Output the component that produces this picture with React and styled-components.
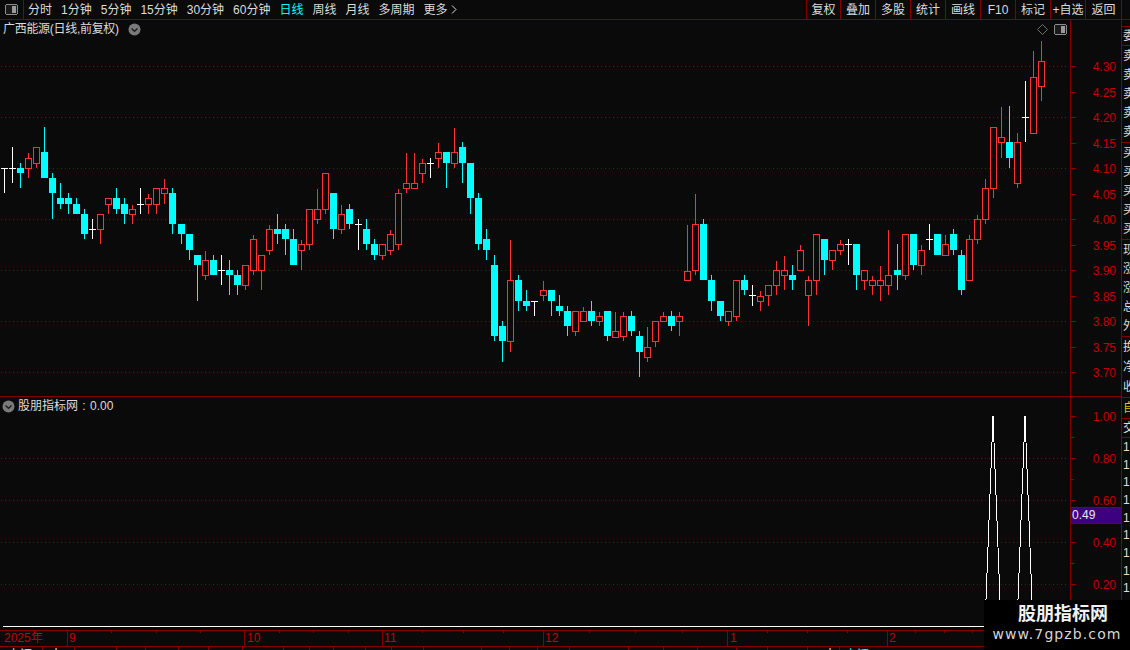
import React from "react";
import styled, { createGlobalStyle } from "styled-components";

const RED_LINE = "#840000";
const AXIS_TEXT = "#c40000";
const BG = "#0a0a0a";
const FONT = `"Liberation Sans", "Noto Sans CJK SC", sans-serif`;

const GlobalStyle = createGlobalStyle`
  html, body {
    margin: 0;
    padding: 0;
    background: ${BG};
    overflow: hidden;
  }
`;

const Page = styled.div`
  position: relative;
  display: flex;
  flex-direction: column;
  width: 1130px;
  height: 650px;
  overflow: hidden;
  background: ${BG};
  color: #ddd;
  font-family: ${FONT};
  font-size: 12px;
`;

/* toolbar */
const Toolbar = styled.div`
  display: flex;
  align-items: center;
  flex: none;
  height: 19px;
  padding-right: 8px;
  border-bottom: 1px solid ${RED_LINE};
`;

const ToggleCell = styled.div`
  display: flex;
  align-items: center;
  justify-content: center;
  box-sizing: border-box;
  width: 24px;
  height: 100%;
  border-right: 1px solid ${RED_LINE};
`;

const PeriodList = styled.div`
  display: flex;
  align-items: center;
  gap: 9px;
  margin-left: 4px;
`;

const Period = styled.span`
  color: ${(p) => (p.$active ? "#00ffff" : "#dcdcdc")};
  white-space: nowrap;
  line-height: 20px;
`;

const ActionList = styled.div`
  display: flex;
  height: 100%;
  margin-left: auto;
`;

const Action = styled.div`
  box-sizing: border-box;
  width: ${(p) => p.$w}px;
  border-left: 1px solid ${RED_LINE};
  border-right: ${(p) => (p.$last ? `1px solid ${RED_LINE}` : "none")};
  text-align: center;
  line-height: 20px;
  white-space: nowrap;
  color: #dcdcdc;
`;

/* main work area */
const Workspace = styled.div`
  display: flex;
  flex: none;
  height: 610px;
`;

const Charts = styled.div`
  display: flex;
  flex-direction: column;
  flex: none;
  width: 1122px;
  box-sizing: border-box;
  border-right: 1px solid ${RED_LINE};
`;

const Panel = styled.div`
  display: flex;
  flex: none;
  height: ${(p) => p.$h}px;
  box-sizing: border-box;
  border-bottom: ${(p) => (p.$ruled ? `1px solid ${RED_LINE}` : "none")};
`;

const ChartArea = styled.div`
  position: relative;
  flex: none;
  width: 1070px;
  height: 100%;
`;

const AxisArea = styled.div`
  position: relative;
  flex: 1;
  height: 100%;
  border-left: 1px solid ${RED_LINE};
`;

const Plot = styled.svg`
  display: block;
  shape-rendering: crispEdges;
`;

const PanelTitle = styled.div`
  position: absolute;
  top: ${(p) => p.$top}px;
  left: ${(p) => p.$left}px;
  display: flex;
  align-items: center;
  gap: ${(p) => p.$gap}px;
  line-height: 16px;
  letter-spacing: ${(p) => p.$tight || 0}px;
  word-spacing: 1px;
  white-space: nowrap;
  color: #dcdcdc;
`;

const CornerIcons = styled.div`
  position: absolute;
  top: 4px;
  right: 3px;
  display: flex;
  align-items: center;
  gap: 6px;
`;

const ValueTag = styled.div`
  position: absolute;
  top: 110px;
  left: 0;
  right: 0;
  height: 15px;
  background: #3d0080;
  border-top: 1px solid ${RED_LINE};
  border-bottom: 1px solid ${RED_LINE};
  padding-left: 1px;
  line-height: 15px;
  color: #e8e8e8;
`;

/* clipped quote column on the right edge */
const Sidebar = styled.div`
  display: flex;
  flex-direction: column;
  flex: 1;
  overflow: hidden;
`;

const SideTop = styled.div`
  flex: none;
  height: 6px;
`;

const SideGroup = styled.div`
  display: flex;
  flex-direction: column;
  flex: none;
  height: ${(p) => p.$h}px;
  box-sizing: border-box;
  border-top: 1px solid ${RED_LINE};
`;

const SideRow = styled.div`
  flex: 1;
  padding-left: 1px;
  display: flex;
  align-items: center;
  font-size: 12px;
  line-height: 1;
  white-space: nowrap;
  color: ${(p) => p.$color || "#dcdcdc"};
`;

/* time axis */
const TimeAxis = styled.div`
  position: relative;
  display: flex;
  flex: none;
  height: 15px;
  border-top: 1px solid ${RED_LINE};
  border-bottom: 1px solid ${RED_LINE};
`;

const TimeCell = styled.div`
  flex: none;
  box-sizing: border-box;
  width: ${(p) => p.$w}px;
  padding: 0 0 0 ${(p) => p.$pad}px;
  border-left: ${(p) => (p.$first ? "none" : `1px solid ${RED_LINE}`)};
  color: ${AXIS_TEXT};
  line-height: 15px;
  white-space: nowrap;
`;

const TickLayer = styled.svg`
  position: absolute;
  top: 0;
  left: 0;
  shape-rendering: crispEdges;
`;

const StatusBar = styled.div`
  display: flex;
  flex: none;
  height: 3px;
  overflow: hidden;
`;

const StatusCell = styled.div`
  flex: none;
  box-sizing: border-box;
  width: ${(p) => p.$w}px;
  padding-left: ${(p) => p.$pad}px;
  border-left: ${(p) => (p.$first ? "none" : `1px solid ${RED_LINE}`)};
  line-height: 17px;
  white-space: nowrap;
  overflow: hidden;
  color: ${(p) => p.$color || "#e4e4e4"};
`;

const Watermark = styled.div`
  position: absolute;
  left: 984px;
  top: 600px;
  width: 146px;
  height: 50px;
  background: #000;
  display: flex;
  flex-direction: column;
  align-items: center;
`;

const MarkName = styled.div`
  margin: 3px 0 0 12px;
  font-size: 18px;
  font-weight: 700;
  line-height: 22px;
  color: #f2f2f2;
`;

const MarkUrl = styled.div`
  font-family: "DejaVu Sans", sans-serif;
  font-size: 14px;
  line-height: 18px;
  letter-spacing: 1.1px;
  color: #d6d6d6;
`;

// candles traced from the chart: [x, high, top, bottom, low, kind] on a 3x grid
const seg = (x0, rows) =>
  rows.map(([x, hi, top, bot, lo, kind]) => ({
    x: Math.floor(x0 + x / 3),
    hi: Math.round(120 + hi / 3),
    top: Math.round(120 + top / 3),
    bot: Math.round(120 + bot / 3),
    lo: Math.round(120 + lo / 3),
    kind,
  }));

const candles = [
  ...seg(0, [
    [13, 145, 145, 145, 218, "w"], [37, 82, 145, 145, 188, "w"], [61, 130, 144, 158, 203, "c"],
    [85, 100, 115, 145, 173, "r"], [109, 82, 82, 130, 143, "r"], [133, 22, 97, 173, 173, "c"],
    [157, 160, 175, 218, 297, "c"], [181, 190, 235, 251, 266, "c"], [205, 220, 235, 251, 281, "c"],
    [229, 235, 252, 281, 281, "c"], [253, 267, 282, 341, 356, "c"], [277, 297, 327, 327, 356, "w"],
    [301, 283, 283, 328, 371, "r"], [325, 235, 235, 253, 281, "r"], [349, 205, 235, 266, 281, "c"],
    [373, 235, 252, 281, 311, "c"], [397, 255, 268, 283, 311, "r"], [421, 205, 253, 253, 281, "w"],
    [445, 223, 235, 253, 281, "r"], [469, 205, 205, 253, 281, "r"], [493, 178, 205, 220, 251, "r"],
    [517, 205, 220, 311, 341, "c"], [544, 312, 312, 341, 371, "c"], [568, 342, 342, 389, 419, "c"],
    [592, 405, 405, 434, 542, "c"], [616, 393, 421, 466, 479, "r"], [640, 405, 420, 464, 464, "c"],
    [664, 405, 451, 451, 494, "w"], [688, 420, 450, 464, 524, "c"], [712, 450, 465, 494, 524, "c"],
    [736, 436, 436, 496, 509, "r"], [760, 346, 358, 451, 464, "r"], [784, 406, 406, 451, 509, "r"],
    [808, 316, 328, 391, 404, "r"], [832, 282, 327, 341, 371, "c"], [856, 312, 327, 356, 404, "c"],
    [880, 327, 357, 434, 434, "c"], [904, 361, 373, 391, 449, "r"], [928, 268, 268, 373, 389, "r"],
    [952, 207, 268, 298, 311, "r"], [976, 160, 160, 268, 281, "r"], [1000, 220, 220, 326, 356, "c"],
    [1024, 255, 283, 328, 341, "r"], [1048, 252, 267, 311, 326, "c"],
  ]),
  ...seg(350, [
    [25, 297, 313, 313, 389, "w"], [49, 297, 327, 371, 389, "c"], [73, 357, 372, 404, 419, "c"],
    [97, 373, 373, 406, 419, "r"], [121, 331, 343, 391, 404, "r"], [145, 208, 220, 373, 389, "r"],
    [169, 99, 190, 205, 219, "r"], [193, 99, 190, 205, 205, "r"], [217, 117, 130, 160, 188, "r"],
    [241, 114, 130, 130, 173, "w"], [265, 69, 97, 115, 143, "r"], [289, 97, 97, 128, 203, "c"],
    [313, 24, 97, 130, 143, "r"], [337, 66, 82, 128, 188, "c"], [361, 129, 129, 233, 281, "c"],
    [385, 220, 235, 371, 389, "c"], [409, 327, 357, 389, 419, "c"], [433, 405, 435, 647, 662, "c"],
    [457, 603, 618, 662, 725, "c"], [481, 360, 481, 664, 695, "r"], [505, 465, 480, 542, 572, "c"],
    [529, 510, 543, 557, 572, "c"], [553, 544, 544, 544, 587, "w"], [580, 484, 511, 526, 542, "r"],
    [604, 510, 510, 542, 587, "c"], [628, 525, 558, 572, 587, "c"], [652, 558, 573, 617, 647, "c"],
    [676, 574, 574, 634, 647, "r"], [700, 561, 574, 604, 604, "r"], [724, 543, 573, 602, 617, "c"],
    [748, 576, 589, 604, 617, "r"], [772, 573, 573, 647, 662, "c"], [796, 576, 634, 650, 650, "r"],
    [820, 576, 589, 649, 662, "r"], [844, 573, 588, 632, 647, "c"], [868, 633, 648, 695, 770, "c"],
    [892, 621, 682, 712, 725, "r"], [916, 604, 604, 664, 680, "r"], [940, 576, 589, 604, 604, "r"],
    [964, 573, 588, 617, 632, "c"], [988, 576, 589, 604, 647, "r"],
  ]),
  ...seg(680, [
    [22, 315, 452, 481, 481, "r"], [46, 222, 313, 451, 464, "r"], [70, 297, 312, 479, 479, "c"],
    [94, 465, 480, 542, 572, "c"], [121, 543, 543, 587, 602, "c"], [145, 574, 574, 604, 617, "r"],
    [169, 481, 481, 589, 602, "r"], [193, 465, 480, 509, 524, "c"], [217, 495, 526, 526, 557, "w"],
    [241, 514, 527, 544, 572, "r"], [265, 496, 496, 526, 557, "r"], [289, 423, 451, 496, 524, "r"],
    [313, 408, 451, 466, 509, "r"], [337, 435, 465, 479, 509, "c"], [361, 376, 391, 451, 451, "r"],
    [385, 468, 481, 526, 617, "r"], [409, 343, 343, 481, 524, "r"], [433, 357, 357, 419, 464, "c"],
    [457, 391, 391, 421, 449, "r"], [481, 361, 373, 391, 404, "r"], [505, 357, 373, 373, 434, "w"],
    [529, 372, 372, 464, 509, "c"], [553, 451, 451, 481, 509, "r"], [577, 468, 481, 496, 524, "r"],
    [601, 438, 481, 496, 542, "r"], [625, 331, 466, 496, 524, "r"], [652, 372, 450, 464, 509, "c"],
    [676, 343, 343, 466, 479, "r"], [700, 342, 342, 434, 449, "c"], [724, 376, 391, 436, 464, "r"],
    [748, 312, 358, 358, 389, "w"], [772, 342, 342, 404, 404, "c"], [796, 345, 373, 406, 406, "r"],
    [820, 327, 342, 389, 404, "c"], [844, 390, 405, 509, 524, "c"], [868, 345, 358, 481, 481, "r"],
    [892, 285, 298, 358, 371, "r"], [916, 178, 205, 298, 311, "r"], [940, 22, 22, 205, 233, "r"],
    [964, -39, 52, 67, 113, "r"], [988, -42, 67, 113, 143, "c"], [1012, 40, 67, 190, 203, "r"],
    [1036, -117, -8, -8, 65, "w"], [1060, -207, -130, 38, 38, "r"], [1084, -237, -178, -101, -58, "r"],
  ]),
];

const priceGrid = [66, 117, 168, 219, 270, 321, 372];
const priceLabels = [
  ["4.30", 66], ["4.25", 92], ["4.20", 117], ["4.15", 143], ["4.10", 168], ["4.05", 194], ["4.00", 219],
  ["3.95", 245], ["3.90", 270], ["3.85", 296], ["3.80", 321], ["3.75", 347], ["3.70", 372],
];
const indicatorGrid = [458, 500, 542, 584];
const indicatorLabels = [["1.00", 416], ["0.80", 458], ["0.60", 500], ["0.40", 542], ["0.20", 584]];
const indicatorMinor = [437, 479, 521, 563, 605];

const periods = ["分时", "1分钟", "5分钟", "15分钟", "30分钟", "60分钟", "日线", "周线", "月线", "多周期"];
const actions = [
  ["复权", 34], ["叠加", 35], ["多股", 35], ["统计", 35], ["画线", 35], ["F10", 35], ["标记", 35], ["+自选", 35], ["返回", 37],
];

const quoteGroups = [
  { h: 19, rows: ["委比"] },
  { h: 97, rows: ["卖五", "卖四", "卖三", "卖二", "卖一"] },
  { h: 97, rows: ["买一", "买二", "买三", "买四", "买五"] },
  { h: 97, rows: ["现价", "涨跌", "涨幅", "总量", "外盘"] },
  { h: 61, rows: ["换手", "净资", "收益"] },
];

const timeCells = [
  ["2025年", 67, 4], ["9", 177, 1], ["10", 138, 2], ["11", 161, 1], ["12", 184, 1], ["1", 160, 2], ["2", 243, 1],
];
const minorTicks = [111, 156, 200, 279, 313, 348, 422, 463, 503, 589, 635, 682, 767, 807, 847, 915, 944, 972];

// bottom strip, only the top pixels of its text are on screen
const statusCells = [
  ["上证", 42, 8], ["十", 32, 7], ["", 42], ["", 29], ["", 33], ["", 30], ["", 34], ["", 41], ["", 26], ["", 24],
  ["", 32], ["", 26], ["", 32], ["", 58], ["", 28], ["", 28], ["", 32], ["", 59], ["", 35], ["", 34], ["", 39],
  ["", 31], ["", 40], ["十", 32, 16], ["上证", 33, 5, "#00ffff"],
];

function Candle({ c }) {
  if (c.kind === "w") {
    return (
      <g stroke="#fff">
        <line x1={c.x + 0.5} x2={c.x + 0.5} y1={c.hi} y2={c.lo} />
        <line x1={c.x - 3} x2={c.x + 4} y1={c.top + 0.5} y2={c.top + 0.5} />
      </g>
    );
  }
  if (c.kind === "c") {
    return (
      <g>
        <line x1={c.x + 0.5} x2={c.x + 0.5} y1={c.hi} y2={c.lo} stroke="#00ffff" />
        <rect x={c.x - 3} y={c.top} width={7} height={c.bot - c.top} fill="#00ffff" />
      </g>
    );
  }
  return (
    <g>
      <line x1={c.x + 0.5} x2={c.x + 0.5} y1={c.hi} y2={c.lo} stroke="#ff3333" />
      <rect x={c.x - 2.5} y={c.top + 0.5} width={6} height={c.bot - c.top} fill={BG} stroke="#ff3333" />
    </g>
  );
}

function GridLines({ rows, width }) {
  return rows.map((y) => (
    <line key={y} x1={1} x2={width} y1={y + 0.5} y2={y + 0.5} stroke="#7a0505" strokeDasharray="1 3" />
  ));
}

function ScaleAxis({ y0, height, labels, minor }) {
  return (
    <Plot width={51} height={height} viewBox={`1071 ${y0} 51 ${height}`}>
      {labels.map(([text, y]) => (
        <g key={text}>
          <line x1={1071} x2={1076} y1={y + 0.5} y2={y + 0.5} stroke={RED_LINE} />
          <text x={1116} y={y + 5} textAnchor="end" fill={AXIS_TEXT} fontSize="12" fontFamily={FONT}>
            {text}
          </text>
        </g>
      ))}
      {minor.map((y) => (
        <line key={y} x1={1071} x2={1074} y1={y + 0.5} y2={y + 0.5} stroke={RED_LINE} />
      ))}
    </Plot>
  );
}

function ChevronBadge() {
  return (
    <svg width="13" height="13" viewBox="0 0 13 13">
      <circle cx="6.5" cy="6.5" r="6" fill="#7a7a7a" />
      <path d="M3.5 5.5 L6.5 8.2 L9.5 5.5" fill="none" stroke="#1c1c1c" strokeWidth="1.4" />
    </svg>
  );
}

function ToggleIcon() {
  return (
    <svg width="13" height="11" viewBox="0 0 13 11" shapeRendering="crispEdges">
      <rect x="0.5" y="0.5" width="12" height="10" rx="2" fill="#1a1a1a" stroke="#8c8c8c" />
      <rect x="7" y="2" width="4" height="7" fill="#9a9a9a" />
    </svg>
  );
}

export default function App() {
  return (
    <Page>
      <GlobalStyle />
      <Toolbar>
        <ToggleCell>
          <ToggleIcon />
        </ToggleCell>
        <PeriodList>
          {periods.map((label) => (
            <Period key={label} $active={label === "日线"}>
              {label}
            </Period>
          ))}
          <Period>
            更多 <svg width="6" height="9" viewBox="0 0 6 9"><path d="M1 0.5 L5 4.5 L1 8.5" fill="none" stroke="#dcdcdc" /></svg>
          </Period>
        </PeriodList>
        <ActionList>
          {actions.map(([label, w], i) => (
            <Action key={label} $w={w} $last={i === actions.length - 1}>
              {label}
            </Action>
          ))}
        </ActionList>
      </Toolbar>

      <Workspace>
        <Charts>
          <Panel $h={377} $ruled>
            <ChartArea>
              <Plot width={1070} height={376} viewBox="0 20 1070 376">
                <GridLines rows={priceGrid} width={1068} />
                {candles.map((c) => (
                  <Candle key={c.x} c={c} />
                ))}
              </Plot>
              <PanelTitle $top={1} $left={3} $gap={9} $tight={-0.3}>
                广西能源(日线,前复权)
                <ChevronBadge />
              </PanelTitle>
              <CornerIcons>
                <svg width="11" height="11" viewBox="0 0 11 11">
                  <path d="M5.5 0.5 L10.5 5.5 L5.5 10.5 L0.5 5.5 Z" fill="none" stroke="#6e6e6e" />
                </svg>
                <ToggleIcon />
              </CornerIcons>
            </ChartArea>
            <AxisArea>
              <ScaleAxis y0={20} height={376} labels={priceLabels} minor={[]} />
            </AxisArea>
          </Panel>
          <Panel $h={233}>
            <ChartArea>
              <Plot width={1070} height={233} viewBox="0 397 1070 233">
                <GridLines rows={indicatorGrid} width={1066} />
                <polyline
                  points="3,626 985,626 993,416 1001,626 1017,626 1025,416 1033,626 1041,626"
                  fill="none"
                  stroke="#fff"
                />
              </Plot>
              <PanelTitle $top={1} $left={2} $gap={3}>
                <ChevronBadge />
                股朋指标网 : 0.00
              </PanelTitle>
            </ChartArea>
            <AxisArea>
              <ScaleAxis y0={397} height={233} labels={indicatorLabels} minor={indicatorMinor} />
              <ValueTag>0.49</ValueTag>
            </AxisArea>
          </Panel>
        </Charts>
        <Sidebar>
          <SideTop />
          {quoteGroups.map((g) => (
            <SideGroup key={g.rows[0]} $h={g.h}>
              {g.rows.map((r) => (
                <SideRow key={r}>{r}</SideRow>
              ))}
            </SideGroup>
          ))}
          <SideGroup $h={21}>
            <SideRow $color="#d8c800">自选</SideRow>
          </SideGroup>
          <SideGroup $h={19}>
            <SideRow>交易</SideRow>
          </SideGroup>
          <SideGroup $h={160}>
            {Array.from({ length: 9 }, (_, i) => (
              <SideRow key={i}>1</SideRow>
            ))}
          </SideGroup>
        </Sidebar>
      </Workspace>

      <TimeAxis>
        {timeCells.map(([label, w, pad], i) => (
          <TimeCell key={label} $w={w} $pad={pad} $first={i === 0}>
            {label}
          </TimeCell>
        ))}
        <TickLayer width={1130} height={3}>
          {minorTicks.map((x) => (
            <line key={x} x1={x + 0.5} x2={x + 0.5} y1={0} y2={2} stroke={RED_LINE} />
          ))}
        </TickLayer>
      </TimeAxis>
      <StatusBar>
        {statusCells.map(([label, w, pad = 4, color], i) => (
          <StatusCell key={i} $w={w} $pad={pad} $color={color} $first={i === 0}>
            {label}
          </StatusCell>
        ))}
      </StatusBar>

      <Watermark>
        <MarkName>股朋指标网</MarkName>
        <MarkUrl>www.7gpzb.com</MarkUrl>
      </Watermark>
    </Page>
  );
}
